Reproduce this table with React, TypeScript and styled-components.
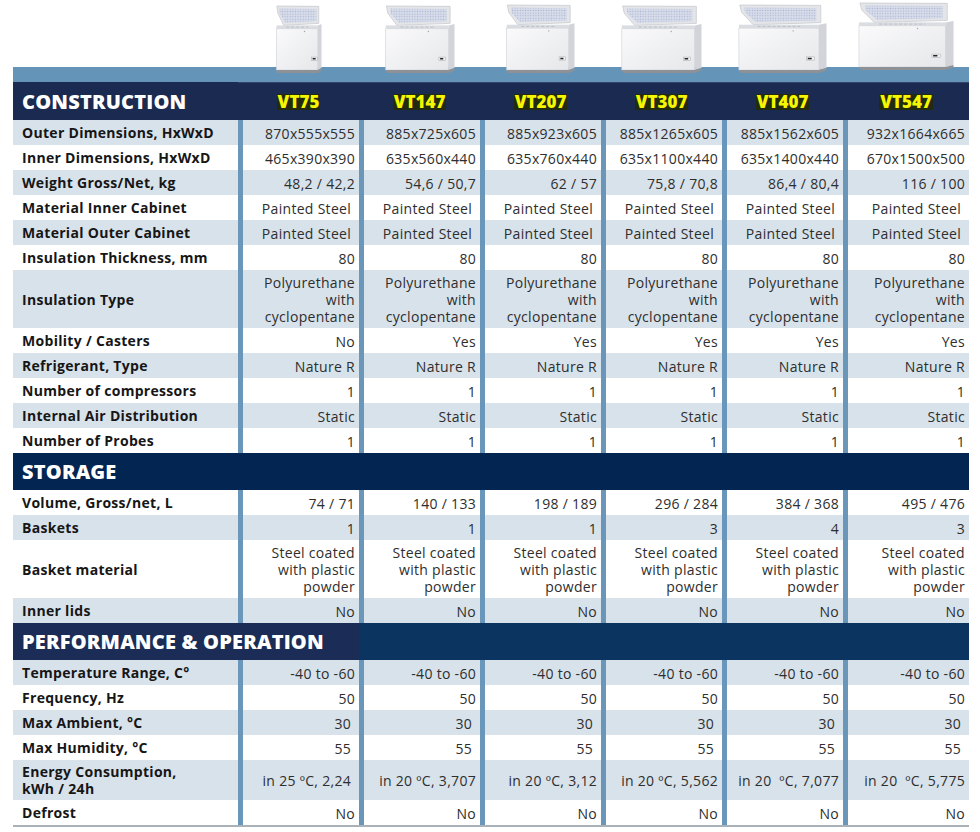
import React, { useId } from "react";
import styled, { createGlobalStyle } from "styled-components";

const GlobalStyle = createGlobalStyle`
  body {
    margin: 0;
    background: #ffffff;
    font-family: "Open Sans", "Liberation Sans", sans-serif;
  }
`;

const COLS = "225px repeat(5, 121px) 126px";

const Page = styled.div`
  width: 980px;
  padding-left: 13px;
  box-sizing: border-box;
`;

const PictureStrip = styled.div`
  display: grid;
  grid-template-columns: ${COLS};
  height: 67px;
  align-items: end;
`;

const PictureCell = styled.div<{ $lift: number }>`
  display: flex;
  justify-content: center;
  position: relative;
  z-index: 2;
  margin-bottom: ${(p) => -6 + p.$lift}px;
`;

const Band = styled.div`
  width: 956px;
  height: 15px;
  background: #6495b8;
`;

const Table = styled.div`
  width: 956px;
  border-bottom: 2px solid #a9b1b9;
`;

const SectionHeader = styled.div<{ $tall?: boolean }>`
  display: grid;
  grid-template-columns: ${COLS};
  height: ${(p) => (p.$tall ? 38 : 37)}px;
  background: ${(p) => (p.$tall ? "#1a2a50" : "#022552")};
`;

const SectionTitle = styled.div<{ $bg?: string; $span?: number }>`
  grid-column: ${(p) => `1 / span ${p.$span || 1}`};
  display: flex;
  align-items: center;
  padding-left: 9px;
  color: #ffffff;
  font-size: 20px;
  font-weight: 800;
  letter-spacing: 0.2px;
  white-space: nowrap;
  background: ${(p) => p.$bg || "transparent"};
`;

const HeaderFill = styled.div<{ $bg: string }>`
  grid-column: 3 / span 5;
  background: ${(p) => p.$bg};
`;

const ModelCell = styled.div`
  display: flex;
  align-items: center;
  justify-content: center;
  border-top: 1px solid #34446a;
`;

const ModelName = styled.span`
  background: #222a10;
  color: #f6f600;
  font-size: 17px;
  font-weight: 800;
  line-height: 16px;
  padding: 0 1px;
`;

const Row = styled.div<{ $shade: boolean }>`
  display: grid;
  grid-template-columns: ${COLS};
  min-height: 25px;
  background: ${(p) => (p.$shade ? "#d8e2eb" : "#ffffff")};
`;

const Label = styled.div`
  display: flex;
  align-items: center;
  padding: 3px 0 3px 9px;
  font-size: 14px;
  font-weight: 700;
  letter-spacing: 0.3px;
  line-height: 17px;
  white-space: pre-line;
  color: #161616;
`;

const Value = styled.div`
  display: flex;
  align-items: center;
  justify-content: flex-end;
  text-align: right;
  white-space: pre-line;
  border-left: 5px solid #6a97b9;
  padding: 4px 4px 3px 0;
  font-size: 14px;
  font-weight: 400;
  letter-spacing: 0.3px;
  line-height: 17px;
  color: #2e2e2e;
`;

type Section = {
  title: string;
  kind: "construction" | "storage" | "performance";
  startShaded: boolean;
  rows: { label: string; values: string[] }[];
};

const all = (v: string) => [v, v, v, v, v, v];
const sp = "\u00a0";

const models = [
  { name: "VT75", w: 46, h: 68, lift: 0 },
  { name: "VT147", w: 70, h: 68, lift: 0 },
  { name: "VT207", w: 69, h: 69, lift: 0 },
  { name: "VT307", w: 81, h: 68, lift: 0 },
  { name: "VT407", w: 89, h: 69, lift: 0 },
  { name: "VT547", w: 96, h: 68, lift: 3 },
];

const sections: Section[] = [
  {
    title: "CONSTRUCTION",
    kind: "construction",
    startShaded: true,
    rows: [
      { label: "Outer Dimensions, HxWxD", values: ["870x555x555", "885x725x605", "885x923x605", "885x1265x605", "885x1562x605", "932x1664x665"] },
      { label: "Inner Dimensions, HxWxD", values: ["465x390x390", "635x560x440", "635x760x440", "635x1100x440", "635x1400x440", "670x1500x500"] },
      { label: "Weight Gross/Net, kg", values: ["48,2 / 42,2", "54,6 / 50,7", "62 / 57", "75,8 / 70,8", "86,4 / 80,4", "116 / 100"] },
      { label: "Material Inner Cabinet", values: all("Painted Steel" + sp) },
      { label: "Material Outer Cabinet", values: all("Painted Steel" + sp) },
      { label: "Insulation Thickness, mm", values: all("80") },
      { label: "Insulation Type", values: all("Polyurethane\nwith\ncyclopentane") },
      { label: "Mobility / Casters", values: ["No", "Yes", "Yes", "Yes", "Yes", "Yes"] },
      { label: "Refrigerant, Type", values: all("Nature R") },
      { label: "Number of compressors", values: all("1") },
      { label: "Internal Air Distribution", values: all("Static") },
      { label: "Number of Probes", values: all("1") },
    ],
  },
  {
    title: "STORAGE",
    kind: "storage",
    startShaded: false,
    rows: [
      { label: "Volume, Gross/net, L", values: ["74 / 71", "140 / 133", "198 / 189", "296 / 284", "384 / 368", "495 / 476"] },
      { label: "Baskets", values: ["1", "1", "1", "3", "4", "3"] },
      { label: "Basket material", values: all("Steel coated\nwith plastic\npowder") },
      { label: "Inner lids", values: all("No") },
    ],
  },
  {
    title: "PERFORMANCE & OPERATION",
    kind: "performance",
    startShaded: true,
    rows: [
      { label: "Temperature Range, C°", values: all("-40 to -60") },
      { label: "Frequency, Hz", values: all("50") },
      { label: "Max Ambient, °C", values: all("30" + sp) },
      { label: "Max Humidity, °C", values: all("55" + sp) },
      {
        label: "Energy Consumption,\nkWh / 24h",
        values: ["in 25 ºC, 2,24" + sp, "in 20 ºC, 3,707", "in 20 ºC, 3,12", "in 20 ºC, 5,562", "in 20 " + sp + "ºC, 7,077", "in 20 " + sp + "ºC, 5,775"],
      },
      { label: "Defrost", values: all("No") },
    ],
  },
];

// chest freezer with its lid open, drawn to the size of each model
function Freezer({ w, h }: { w: number; h: number }) {
  const id = useId().replace(/:/g, "");
  const top = h * 0.3;
  const front = w * 0.91;
  const bottom = h - 3;
  const pts = (list: number[][]) => list.map(([x, y]) => `${x},${y}`).join(" ");
  return (
    <svg width={w} height={h} viewBox={`0 0 ${w} ${h}`}>
      <defs>
        <pattern id={`d${id}`} width="2.6" height="2.6" patternUnits="userSpaceOnUse">
          <rect width="2.6" height="2.6" fill="#d7dcea" />
          <circle cx="1.3" cy="1.3" r="0.65" fill="#aab4d0" />
        </pattern>
        <linearGradient id={`f${id}`} x1="0" y1="0" x2="1" y2="1">
          <stop offset="0" stopColor="#fafafb" />
          <stop offset="1" stopColor="#e6e7ea" />
        </linearGradient>
      </defs>
      {/* lid, seen from below */}
      <polygon
        points={pts([[w * 0.02, 1], [w * 0.93, h * 0.02], [w * 0.93, h * 0.27], [w * 0.17, top], [w * 0.04, h * 0.12]])}
        fill="#e4e5e8"
        stroke="#c3c6cc"
        strokeWidth="0.7"
      />
      <polygon
        points={pts([[w * 0.07, h * 0.05], [w * 0.88, h * 0.06], [w * 0.88, h * 0.24], [w * 0.2, h * 0.26], [w * 0.08, h * 0.13]])}
        fill={`url(#d${id})`}
      />
      {/* opening rim */}
      <rect x={w * 0.01} y={top} width={front - w * 0.01} height={h * 0.05} fill="#dadde2" />
      <line
        x1={w * 0.22}
        y1={top + h * 0.025}
        x2={w * 0.7}
        y2={top + h * 0.025}
        stroke="#b6bac2"
        strokeWidth="0.8"
        strokeDasharray="3 2"
      />
      {/* front and side */}
      <rect
        x={w * 0.01}
        y={top + h * 0.05}
        width={front - w * 0.01}
        height={bottom - top - h * 0.05}
        fill={`url(#f${id})`}
        stroke="#cdd0d5"
        strokeWidth="0.6"
      />
      <polygon points={pts([[front, top], [w - 0.5, top - 1.5], [w - 0.5, bottom - 2], [front, bottom]])} fill="#d2d4d9" />
      <circle cx={w * 0.62} cy={top + h * 0.09} r="0.7" fill="#a0a5ad" />
      {/* display */}
      <rect x={front - w * 0.14} y={bottom - h * 0.19} width={Math.max(6, w * 0.09)} height="3.2" fill="#f4f4f4" stroke="#a2a6ad" strokeWidth="0.5" />
      <rect x={front - w * 0.14 + 1.2} y={bottom - h * 0.19 + 0.9} width={Math.max(3, w * 0.045)} height="1.5" fill="#262628" />
      {/* plinth */}
      <polygon points={pts([[w * 0.01, bottom], [front, bottom], [w - 0.5, bottom - 2], [w - 0.5, bottom + 0.5], [front, h], [w * 0.03, h]])} fill="#8e9196" />
    </svg>
  );
}

function SectionBlock({ section }: { section: Section }) {
  return (
    <>
      {section.kind === "construction" && (
        <SectionHeader $tall>
          <SectionTitle>{section.title}</SectionTitle>
          {models.map((m) => (
            <ModelCell key={m.name}>
              <ModelName>{m.name}</ModelName>
            </ModelCell>
          ))}
        </SectionHeader>
      )}
      {section.kind === "storage" && (
        <SectionHeader>
          <SectionTitle>{section.title}</SectionTitle>
        </SectionHeader>
      )}
      {section.kind === "performance" && (
        <SectionHeader>
          <SectionTitle $bg="#1b2d56" $span={2}>
            {section.title}
          </SectionTitle>
          <HeaderFill $bg="#0b3460" />
        </SectionHeader>
      )}
      {section.rows.map((row, i) => (
        <Row key={row.label} $shade={(i % 2 === 0) === section.startShaded}>
          <Label>{row.label}</Label>
          {row.values.map((v, j) => (
            <Value key={j}>{v}</Value>
          ))}
        </Row>
      ))}
    </>
  );
}

export default function App() {
  return (
    <Page>
      <GlobalStyle />
      <PictureStrip>
        <div />
        {models.map((m) => (
          <PictureCell key={m.name} $lift={m.lift}>
            <Freezer w={m.w} h={m.h} />
          </PictureCell>
        ))}
      </PictureStrip>
      <Band />
      <Table>
        {sections.map((s) => (
          <SectionBlock key={s.title} section={s} />
        ))}
      </Table>
    </Page>
  );
}
